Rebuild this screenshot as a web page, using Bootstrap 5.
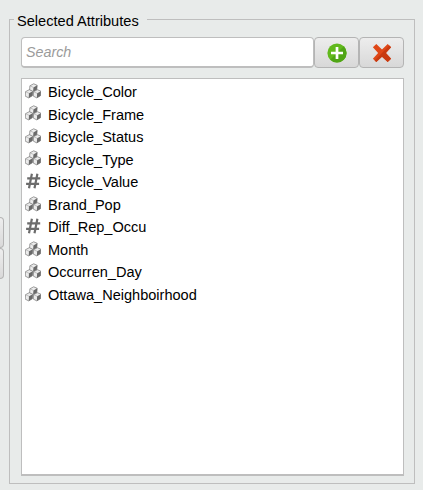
<!DOCTYPE html>
<html lang="en">
<head>
<meta charset="utf-8">
<meta name="viewport" content="width=device-width, initial-scale=1">
<title>Selected Attributes</title>
<link href="https://cdn.jsdelivr.net/npm/bootstrap@5.3.0/dist/css/bootstrap.min.css" rel="stylesheet">
<style>
body{background:#e8ebea;font-family:"Liberation Sans",Arial,sans-serif;font-size:14.55px;line-height:22.56px;color:#000;height:490px}
.side-strip{width:4px;padding-top:217px;margin-right:5px}
.side-btn{height:31px;border:1px solid #b4b4b4;border-left:0;border-radius:0 4px 4px 0;background:linear-gradient(#eee,#d9d9d9)}
.attr-panel{width:406px;height:465px;margin-top:19px;border:1px solid #bebebe;padding:0 10px 7px 11px}
.attr-title{font-size:14.6px;line-height:18px;width:133px;margin:-8px 0 7px -7px;padding-left:3px;background:#e8ebea}
.search-box{height:31px;width:293px;padding:0 4px;border:1px solid #bebebe;border-bottom-width:2px;border-radius:4px;font-size:14.3px;line-height:28px;background:#fff}
.search-box:focus{box-shadow:none;border-color:#999}
.search-box::placeholder{color:#9b9b9b;font-style:italic;opacity:1}
.tool-btn{width:45px;height:31px;border:1px solid #b4b4b4;border-radius:4px;background:linear-gradient(#ededed,#d8d8d8)}
.tool-btn svg{width:20px;height:20px}
.attr-list{margin-top:10px;border:1px solid #bebebe;border-bottom-width:2px;padding-top:2px}
.attr-row{height:22.56px;padding-left:3px}
.attr-row svg{width:16px;height:16px;margin:0 7px 3px 0}
</style>
<script src="https://cdn.jsdelivr.net/npm/bootstrap@5.3.0/dist/js/bootstrap.bundle.min.js"></script>
</head>
<body class="d-flex align-items-start overflow-hidden">
<svg width="0" height="0" class="d-none">
  <defs>
    <g id="cube">
      <path d="M4.3 0 7.8 1.5 7.4 6 3.7 8.2 .2 6.4 .5 2Z" fill="#ececec" stroke="#858585" stroke-width=".8"/>
      <path d="M4 3.6 7.8 1.5 7.4 6 3.7 8.2Z" fill="#6a6a6a"/>
      <path d="M.5 2 4 3.6" fill="none" stroke="#a5a5a5" stroke-width=".6"/>
    </g>
    <symbol id="nominal" viewBox="0 0 16 16">
      <use href="#cube" x="4.4" y=".8"/>
      <use href="#cube" x="0" y="6.7"/>
      <use href="#cube" x="8.1" y="6.7"/>
    </symbol>
    <symbol id="numeric" viewBox="0 0 16 16">
      <path d="M6.9 .8 4 15.2M12.4 .8 9.5 15.2M2.2 5.3H15.2M1.1 10.8H14.1" stroke="#6c6c6c" stroke-width="2.2" fill="none"/>
    </symbol>
  </defs>
</svg>
<aside class="side-strip flex-shrink-0"><div class="side-btn"></div><div class="side-btn"></div></aside>
<main class="attr-panel d-flex flex-column flex-shrink-0">
  <h1 class="attr-title fw-normal text-nowrap">Selected Attributes</h1>
  <div class="d-flex">
    <input class="form-control search-box flex-shrink-0" type="text" placeholder="Search" aria-label="Search">
    <button class="btn tool-btn p-0 d-flex align-items-center justify-content-center" type="button" aria-label="Add">
      <svg viewBox="0 0 20 20"><circle cx="10" cy="10" r="9.6" fill="#62b91d"/><path d="M16.8 3.2A9.6 9.6 0 0 1 3.2 16.8Z" fill="#50a516"/><path d="M10 4V16M4 10H16" stroke="#fff" stroke-width="2.7"/></svg>
    </button>
    <button class="btn tool-btn p-0 d-flex align-items-center justify-content-center" type="button" aria-label="Remove">
      <svg viewBox="0 0 20 20"><path d="M4.3.9 10 6.4 15.7.9 19.1 4.3 13.9 10 19.1 15.7 15.7 19.1 10 13.7 4.3 19.1.9 15.7 6.1 10 .9 4.3Z" fill="#df4717"/><path d="M19.1 4.3 13.9 10 19.1 15.7 15.7 19.1 10 13.7 4.3 19.1 2.6 17.4 17.4 2.6Z" fill="#c83a10"/></svg>
    </button>
  </div>
  <ul class="attr-list list-unstyled bg-white flex-grow-1 mb-0">
    <li class="attr-row d-flex align-items-center"><svg><use href="#nominal"/></svg>Bicycle_Color</li>
    <li class="attr-row d-flex align-items-center"><svg><use href="#nominal"/></svg>Bicycle_Frame</li>
    <li class="attr-row d-flex align-items-center"><svg><use href="#nominal"/></svg>Bicycle_Status</li>
    <li class="attr-row d-flex align-items-center"><svg><use href="#nominal"/></svg>Bicycle_Type</li>
    <li class="attr-row d-flex align-items-center"><svg><use href="#numeric"/></svg>Bicycle_Value</li>
    <li class="attr-row d-flex align-items-center"><svg><use href="#nominal"/></svg>Brand_Pop</li>
    <li class="attr-row d-flex align-items-center"><svg><use href="#numeric"/></svg>Diff_Rep_Occu</li>
    <li class="attr-row d-flex align-items-center"><svg><use href="#nominal"/></svg>Month</li>
    <li class="attr-row d-flex align-items-center"><svg><use href="#nominal"/></svg>Occurren_Day</li>
    <li class="attr-row d-flex align-items-center"><svg><use href="#nominal"/></svg>Ottawa_Neighboirhood</li>
  </ul>
</main>
</body>
</html>
